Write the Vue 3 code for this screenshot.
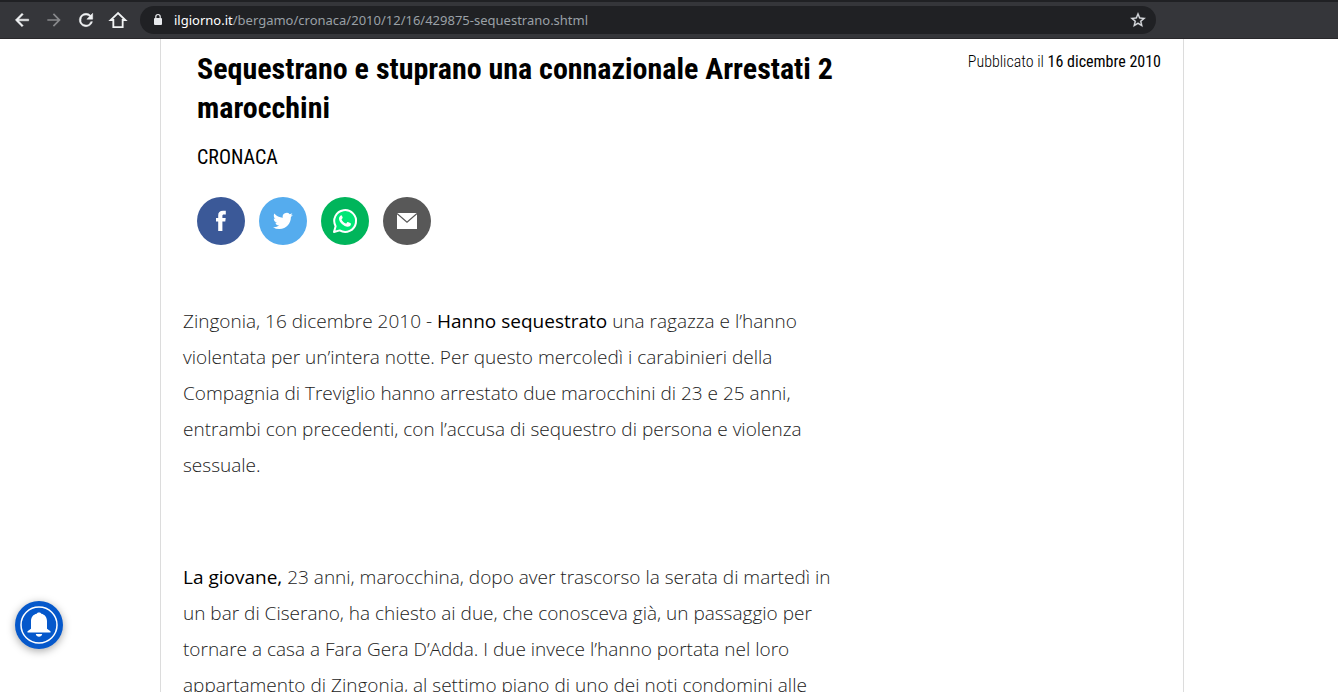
<script setup>
const address = { host: 'ilgiorno.it', path: '/bergamo/cronaca/2010/12/16/429875-sequestrano.shtml' }

const paragraphs = [
  {
    pre: 'Zingonia, 16 dicembre 2010 - ',
    strong: 'Hanno sequestrato',
    lines: [
      ' una ragazza e l’hanno',
      'violentata per un’intera notte. Per questo mercoledì i carabinieri della',
      'Compagnia di Treviglio hanno arrestato due marocchini di 23 e 25 anni,',
      'entrambi con precedenti, con l’accusa di sequestro di persona e violenza',
      'sessuale.'
    ]
  },
  {
    pre: '',
    strong: 'La giovane,',
    lines: [
      ' 23 anni, marocchina, dopo aver trascorso la serata di martedì in',
      'un bar di Ciserano, ha chiesto ai due, che conosceva già, un passaggio per',
      'tornare a casa a Fara Gera D’Adda. I due invece l’hanno portata nel loro',
      'appartamento di Zingonia, al settimo piano di uno dei noti condomini alle'
    ]
  }
]
</script>

<template>
  <div class="window">
    <header class="toolbar">
      <nav class="nav" aria-label="Navigazione">
        <button type="button" aria-label="Indietro">
          <svg viewBox="0 0 24 24" fill="#f1f3f4" stroke="#f1f3f4" stroke-width=".6"><path d="M20 11H7.830l5.590-5.590L12 4l-8 8 8 8 1.410-1.410L7.830 13H20z" /></svg>
        </button>
        <button type="button" aria-label="Avanti" disabled>
          <svg viewBox="0 0 24 24" fill="#88898c"><path d="M12 4l-1.410 1.410L16.170 11H4v2h12.170l-5.580 5.590L12 20l8-8z" /></svg>
        </button>
        <button type="button" aria-label="Ricarica">
          <svg viewBox="0 0 24 24" fill="#f1f3f4" stroke="#f1f3f4" stroke-width=".6"><path d="M17.650 6.350A7.960 7.960 0 0 0 12 4a8 8 0 1 0 7.730 10h-2.080A6 6 0 1 1 12 6c1.660 0 3.140.690 4.220 1.780L13 11h7V4z" /></svg>
        </button>
        <button type="button" aria-label="Pagina iniziale">
          <svg viewBox="0 0 24 24" fill="none" stroke="#f1f3f4" stroke-width="2.200"><path d="M12 3.700 3.200 12H6.400v8.500h11.200V12h3.200z" /></svg>
        </button>
      </nav>
      <div class="omnibox">
        <svg class="lock" viewBox="0 0 10 14"><rect x="1" y="5" width="8" height="7" rx="1" fill="#e8eaed" /><path d="M2.800 5V3.700a2.200 2.200 0 0 1 4.400 0V5" fill="none" stroke="#e8eaed" stroke-width="1.200" /></svg>
        <p class="url"><span>{{ address.host }}</span>{{ address.path }}</p>
        <button type="button" class="star" aria-label="Aggiungi ai preferiti">
          <svg viewBox="0 0 24 24" fill="#dadce0" stroke="#dadce0" stroke-width=".4"><path d="M22 9.240l-7.190-.620L12 2 9.190 8.630 2 9.240l5.460 4.730L5.820 21 12 17.270 18.180 21l-1.630-7.030zM12 15.400l-3.760 2.270 1-4.280-3.320-2.880 4.380-.380L12 6.100l1.710 4.040 4.380.380-3.320 2.880 1 4.280z" /></svg>
        </button>
      </div>
    </header>

    <main class="page">
      <article class="sheet">
        <header class="head">
          <div class="intro">
            <h1>Sequestrano e stuprano una connazionale Arrestati 2<br>marocchini</h1>
            <a class="section" href="#cronaca">CRONACA</a>
            <div class="share">
              <a class="facebook" href="#facebook" aria-label="Facebook">
                <svg viewBox="0 0 48 48"><path fill="#fff" d="M21.200 34V24.500H19V21h2.200v-2.500c0-3.200 1.600-4.700 4.800-4.700h2.800v3.700H27c-1.300 0-1.600.500-1.600 1.500v2h3.300l-.400 3.500h-2.900V34z" /></svg>
              </a>
              <a class="twitter" href="#twitter" aria-label="Twitter">
                <svg viewBox="0 0 48 48"><path fill="#fff" transform="translate(14 14) scale(.83)" d="M23.950 4.570a10 10 0 0 1-2.820.770 4.960 4.960 0 0 0 2.160-2.720c-.950.550-2 .950-3.130 1.180a4.920 4.920 0 0 0-8.380 4.480C7.690 8.100 4.070 6.130 1.640 3.160a4.820 4.820 0 0 0-.670 2.480c0 1.710.870 3.210 2.190 4.100a4.900 4.900 0 0 1-2.230-.620v.060a4.920 4.920 0 0 0 3.950 4.830 5 5 0 0 1-2.210.080 4.940 4.940 0 0 0 4.600 3.420A9.870 9.870 0 0 1 0 19.540a13.990 13.990 0 0 0 7.550 2.210c9.050 0 14-7.500 14-13.980l-.020-.640a9.940 9.940 0 0 0 2.420-2.560z" /></svg>
              </a>
              <a class="whatsapp" href="#whatsapp" aria-label="WhatsApp">
                <svg viewBox="0 0 48 48"><path fill="#00e676" stroke="#fff" stroke-width="2" stroke-linejoin="round" d="M13 35l1.600-5.800A10.900 10.900 0 1 1 18.700 33.400z" /><path fill="#fff" d="M20.300 18.200c-.500 0-2.300 1.300-2.300 3.500 0 3.300 5 8 8.600 8 2 0 3.400-1.300 3.400-3 0-.500-3-2-3.400-1.800-.700.300-1.200 1.700-1.700 1.600-1.500-.300-3.800-2.600-4.300-4-.100-.500 1-1.100 1.100-1.700 0-.500-.900-2.600-1.400-2.600z" /></svg>
              </a>
              <a class="mail" href="#mail" aria-label="Email">
                <svg viewBox="0 0 48 48"><path fill="#fff" d="M14 16h20v16H14z" /><path fill="none" stroke="#585858" stroke-width="1.200" d="M14 16.500l10 8.800 10-8.800" /></svg>
              </a>
            </div>
          </div>
          <p class="date">Pubblicato il <time datetime="2010-12-16">16 dicembre 2010</time></p>
        </header>

        <div class="body">
          <p v-for="p in paragraphs" :key="p.strong">
            {{ p.pre }}<strong>{{ p.strong }}</strong><template v-for="(line, i) in p.lines" :key="i"><br v-if="i">{{ line }}</template>
          </p>
        </div>
      </article>
    </main>

    <button type="button" class="bell" aria-label="Notifiche">
      <svg viewBox="0 0 48 48"><circle cx="24" cy="24" r="18" fill="none" stroke="#fff" stroke-width="1.500" /><path fill="#fff" d="M12.500 31.500v-1.200l3.500-2.500V20c0-3.800 2.200-6.600 5.700-7.300.600-1.500 4-1.500 4.600 0 3.500.700 5.700 3.500 5.700 7.300v7.800l3.500 2.500v1.200zM20.800 33h6.400c-.500 3.600-5.900 3.600-6.400 0z" /></svg>
    </button>
  </div>
</template>

<style>
body { margin: 0; overflow: hidden; }
</style>

<style scoped>
.window {
  display: flex;
  flex-direction: column;
  height: 100vh;
  overflow: hidden;
  background: #fff;
  color: #000;
  font-family: "Open Sans", sans-serif;
}
button { padding: 0; border: 0; background: none; }
svg { display: block; }
a { color: inherit; text-decoration: none; }
.toolbar {
  display: flex;
  align-items: center;
  box-sizing: border-box;
  flex: none;
  height: 39px;
  padding: 0 182px 0 12px;
  gap: 12px;
  background: #35363a;
  border-top: 2px solid #202124;
  border-bottom: 1px solid #29282b;
}
.nav { display: flex; gap: 12px; }
.nav svg { width: 20px; height: 20px; }
.omnibox {
  display: flex;
  align-items: center;
  flex: 1;
  box-sizing: border-box;
  height: 28px;
  padding: 0 9px 0 13px;
  border-radius: 14px;
  background: #202124;
}
.lock { width: 10px; height: 14px; }
.url {
  flex: 1;
  margin: 0 0 0 11px;
  font: 13px/20px "Noto Sans", "Open Sans", sans-serif;
  color: #9aa0a6;
  white-space: nowrap;
}
.url span { color: #fff; }
.star svg { width: 18px; height: 18px; }
.page {
  flex: 1;
  min-height: 0;
  display: flex;
  justify-content: center;
  padding: 0 154px 0 160px;
}
.sheet {
  flex: 1;
  box-sizing: border-box;
  border: solid #dcdcdc;
  border-width: 0 1px;
  padding: 10px 22px 0;
}
.head {
  display: flex;
  justify-content: space-between;
  padding-left: 14px;
  font-family: "Roboto Condensed", "Liberation Sans Narrow", "Roboto", sans-serif;
}
h1 {
  margin: 0;
  font-size: 30px;
  line-height: 39px;
  font-weight: 700;
  white-space: nowrap;
}
.section {
  display: block;
  margin-top: 18px;
  font-size: 20px;
  line-height: 24px;
}
.share { display: flex; gap: 14px; margin-top: 28px; }
.share a { width: 48px; height: 48px; border-radius: 50%; }
.facebook { background: #3b5998; }
.twitter { background: #55acee; }
.whatsapp { background: #00b55b; }
.mail { background: #585858; }
.date {
  margin: 3px 0 0;
  font-size: 16px;
  line-height: 20px;
  font-weight: 300;
  white-space: nowrap;
}
.date time { font-weight: 400; }
.body { margin-top: 58px; }
.body p {
  margin: 0 0 76px;
  font-size: 19px;
  line-height: 36px;
  font-weight: 300;
  color: #222;
  white-space: nowrap;
}
.body strong { font-weight: 400; color: #000; }
.bell {
  position: fixed;
  left: 15px;
  bottom: 43px;
  width: 48px;
  height: 48px;
  border-radius: 50%;
  background: #0558cb;
  box-shadow: 0 2px 8px rgba(0, 0, 0, .35);
}
</style>
